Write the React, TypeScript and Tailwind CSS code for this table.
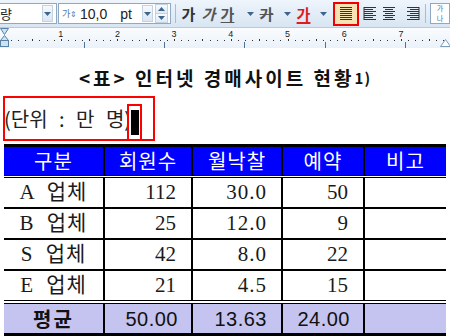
import React from "react";

const KR = "font-['Noto_Sans_CJK_KR',sans-serif]";
const SERIF = "font-['Liberation_Serif','Noto_Sans_CJK_KR',serif]";
const SANS = "font-['Liberation_Sans','Noto_Sans_CJK_KR',sans-serif]";

function Arrow() {
  return (
    <svg width="7" height="4" viewBox="0 0 7 4">
      <path d="M0 0h7L3.5 4z" fill="#3d6489" />
    </svg>
  );
}

function DropBtn() {
  return (
    <div className="flex h-[17px] w-[11px] items-center justify-center border border-[#c4d3e3] bg-linear-to-b from-[#f7fafd] to-[#d9e6f3]">
      <Arrow />
    </div>
  );
}

function AlignIcon({ kind }: { kind: "justify" | "left" | "center" | "right" }) {
  const lines = [0, 1, 2, 3, 4, 5, 6].map((i) => {
    const y = 1.5 + i * 2;
    let x1 = 1;
    let x2 = 13;
    if (kind === "left") x2 = i % 2 ? 10 : 13;
    if (kind === "center") {
      x1 = i % 2 ? 3 : 1;
      x2 = i % 2 ? 11 : 13;
    }
    if (kind === "right") x1 = i % 2 ? 4 : 1;
    return <line key={i} x1={x1} y1={y} x2={x2} y2={y} stroke="#333" strokeWidth="1" />;
  });
  return (
    <svg width="14" height="15" viewBox="0 0 14 15">
      {lines}
      {kind === "left" && <line x1="1" y1="1" x2="1" y2="14" stroke="#333" />}
      {kind === "right" && <line x1="13" y1="1" x2="13" y2="14" stroke="#333" />}
    </svg>
  );
}

function Toolbar() {
  const glyph = `${KR} flex w-[15px] justify-center text-[15px] font-bold leading-none`;
  return (
    <div className="flex h-[27px] items-center bg-linear-to-b from-[#eef5fc] to-[#d8e5f2]">
      {/* font name */}
      <div className="flex h-[21px] w-[57px] items-center border border-l-0 border-[#8fa9c4] bg-white">
        <span className={`${KR} text-[13px] leading-none text-[#222]`}>량</span>
        <div className="ml-auto mr-[3px]">
          <DropBtn />
        </div>
      </div>
      {/* font size */}
      <div className="ml-[1px] flex h-[21px] w-[113px] items-center border border-[#8fa9c4] bg-white">
        <span className={`${KR} ml-[3px] flex w-[13px] items-center text-[9px] leading-none text-[#4d79a6]`}>
          가<span className="text-[8px]">⇕</span>
        </span>
        <span className={`${SANS} ml-[5px] text-[14px] leading-none text-[#222]`}>10,0</span>
        <span className={`${SANS} ml-[13px] text-[14px] leading-none text-[#222]`}>pt</span>
        <div className="ml-[10px]">
          <DropBtn />
        </div>
        <div className="ml-[2px] flex h-[19px] w-[13px] flex-col border border-[#c4d3e3]">
          <div className="flex flex-1 items-center justify-center border-b border-[#c4d3e3] bg-linear-to-b from-[#f7fafd] to-[#dfeaf5]">
            <svg width="7" height="4" viewBox="0 0 7 4">
              <path d="M0 4h7L3.5 0z" fill="#3d6489" />
            </svg>
          </div>
          <div className="flex flex-1 items-center justify-center bg-linear-to-b from-[#f7fafd] to-[#dfeaf5]">
            <Arrow />
          </div>
        </div>
      </div>
      <div className="ml-[4px] h-[19px] w-px bg-[#a8bdd3]" />
      <span className={`${glyph} ml-[5px] text-[#333]`}>가</span>
      <span className={`${glyph} ml-[5px] italic text-[#555]`}>가</span>
      <span className={`${glyph} ml-[4px] text-[#555] underline underline-offset-2`}>가</span>
      <span className="ml-[12px]">
        <Arrow />
      </span>
      <span className={`${glyph} ml-[5px] text-[#555] line-through`}>가</span>
      <span className="ml-[10px]">
        <Arrow />
      </span>
      <span className={`${glyph} ml-[5px] text-[#e01b1b] underline decoration-2 underline-offset-2`}>가</span>
      <span className="ml-[9px]">
        <Arrow />
      </span>
      <div className="ml-[6px] flex h-[24px] w-[26px] items-center justify-center border-2 border-[#f00000] bg-[#f5e3b3]">
        <AlignIcon kind="justify" />
      </div>
      <span className="ml-[4px]">
        <AlignIcon kind="left" />
      </span>
      <span className="ml-[5px]">
        <AlignIcon kind="center" />
      </span>
      <span className="ml-[10px]">
        <AlignIcon kind="right" />
      </span>
      <div className="ml-[5px] h-[19px] w-px bg-[#a8bdd3]" />
      <div className={`${KR} ml-[4px] flex h-[21px] w-[20px] flex-col items-center justify-center gap-[1px] border border-[#8fa9c4] bg-white text-[7px] leading-[9px] text-[#3b74b8]`}>
        <span>가</span>
        <span>나</span>
      </div>
    </div>
  );
}

function Ruler() {
  const unit = 56.7;
  const dots = [];
  for (let i = 0; i < 63; i++) {
    const x = 4 + (i * unit) / 8;
    dots.push(<rect key={i} x={Math.round(x)} y={i % 4 === 0 ? 11 : 12} width="1" height={i % 4 === 0 ? 2 : 1} fill="#333" />);
  }
  const nums = [1, 2, 3, 4, 5, 6, 7];
  const tabs = [84, 164, 244, 325, 405];
  return (
    <div className="h-[21px] border-t border-[#b9cadc] bg-linear-to-b from-[#fafcfe] to-[#eaf2f9]">
      <svg width="450" height="20" viewBox="0 0 450 20">
        {dots}
        {nums.map((n) => (
          <text key={n} x={4 + n * unit} y="9" fontSize="9" textAnchor="middle" fill="#222" fontFamily="Liberation Sans">
            {n}
          </text>
        ))}
        {tabs.map((x) => (
          <line key={x} x1={x + 0.5} y1="14" x2={x + 0.5} y2="20" stroke="#4e7396" />
        ))}
        <path d="M0.5 0.5h8l-4 6z" fill="#cfe2f1" stroke="#5a82a6" />
        <path d="M4.5 7.5l4 5h-8z" fill="#cfe2f1" stroke="#5a82a6" />
        <rect x="0.5" y="12.5" width="8" height="6" fill="#cfe2f1" stroke="#5a82a6" />
        <path d="M440.5 18.5l5 -7l5 7z" fill="#ffffff" stroke="#7a9cbc" />
      </svg>
    </div>
  );
}

const rows = [
  ["A 업체", "112", "30.0", "50"],
  ["B 업체", "25", "12.0", "9"],
  ["S 업체", "42", "8.0", "22"],
  ["E 업체", "21", "4.5", "15"],
];

const grid = "grid grid-cols-[101px_88px_90px_82px_81px]";
const sep = "border-r-2 border-black";

export default function App() {
  return (
    <div className="h-[336px] w-[450px] overflow-hidden bg-white">
      <Toolbar />
      <Ruler />

      {/* title */}
      <div className="mt-[15px] flex h-[28px] items-center justify-center">
        <h1 className={`${KR} text-[19px] font-bold leading-none tracking-[3px] text-[#111]`}>
          &lt;표&gt; 인터넷 경매사이트 현황<span className="relative top-[-2px] text-[15px] tracking-[1px]">1)</span>
        </h1>
      </div>

      {/* unit line with selection boxes */}
      <div className="relative ml-[3px] mt-[5px] flex h-[45px] w-[152px] items-center border-2 border-[#ff0000]">
        <span className={`${KR} -ml-[1px] text-[20px] leading-none text-[#222] [word-spacing:7px]`}>(단위 : 만 명)</span>
        <div className="absolute bottom-[-2px] left-[122px] flex h-[37px] w-[15px] items-center justify-center border-2 border-[#ff0000] bg-white">
          <div className="h-[25px] w-[8px] bg-black" />
        </div>
      </div>

      {/* table */}
      <div className="ml-[4px] mt-[3px] w-[442px] border-t-[3px] border-black">
        <div className={`${grid} h-[28px] bg-[#0000ff] text-white ${KR} text-[20px] leading-none tracking-[1px]`}>
          {["구분", "회원수", "월낙찰", "예약", "비고"].map((h, i) => (
            <div key={h} className={`flex items-center justify-center ${i < 4 ? sep : ""}`}>
              {h}
            </div>
          ))}
        </div>
        <div className="h-[3px] border-y border-black" />
        {rows.map((r, ri) => (
          <div key={r[0]} className={`${grid} ${ri < 3 ? "h-[31px] border-b-2 border-black" : "h-[29px]"} ${SERIF} text-[21px] leading-none text-[#1a1a1a]`}>
            <div className={`flex items-center justify-center tracking-[1px] [word-spacing:6px] ${sep}`}>{r[0]}</div>
            <div className={`flex items-center justify-end pr-[15px] ${sep}`}>{r[1]}</div>
            <div className={`flex items-center justify-end pr-[14px] tracking-[1px] ${sep}`}>{r[2]}</div>
            <div className={`flex items-center justify-end pr-[15px] ${sep}`}>{r[3]}</div>
            <div />
          </div>
        ))}
        <div className="h-[4px] border-y border-black" />
        <div className={`${grid} h-[32px] border-b-[3px] border-black bg-[#c5c3ef] text-[20px] leading-none text-[#111]`}>
          <div className={`${KR} flex items-center justify-center font-bold tracking-[2px] ${sep}`}>평균</div>
          <div className={`${SANS} flex items-center justify-end pr-[13px] tracking-[0.5px] ${sep}`}>50.00</div>
          <div className={`${SANS} flex items-center justify-end pr-[14px] tracking-[0.5px] ${sep}`}>13.63</div>
          <div className={`${SANS} flex items-center justify-end pr-[13px] tracking-[0.5px] ${sep}`}>24.00</div>
          <div />
        </div>
      </div>
    </div>
  );
}
